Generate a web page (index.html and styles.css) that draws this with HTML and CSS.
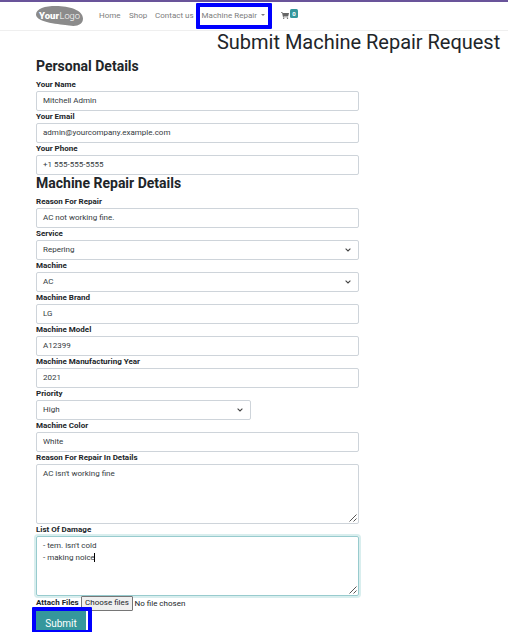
FILE: index.html
```html
<!DOCTYPE html>
<html lang="en">
<head>
<meta charset="utf-8">
<title>Submit Machine Repair Request</title>
<link rel="stylesheet" href="styles.css">
</head>
<body>
<header class="nav">
  <svg class="logo" width="48" height="22" viewBox="0 0 48 22">
    <path d="M1 9.500C1 3.500 10 1 21 1C34 1 48 5 48 13.500C48 19.500 42 22 34 20.500C26 19.500 1 17.500 1 9.500Z" fill="#8b8b8b"/>
    <text class="logo-bold" x="4" y="13.500" textLength="20" lengthAdjust="spacingAndGlyphs">Your</text>
    <text class="logo-thin" x="24.500" y="13.500" textLength="20.500" lengthAdjust="spacingAndGlyphs">Logo</text>
  </svg>
  <nav class="links">
    <a class="home">Home</a>
    <a class="shop">Shop</a>
    <a class="contact">Contact us</a>
    <a class="repair marked">Machine Repair<i class="caret"></i></a>
  </nav>
  <div class="cart">
    <svg width="8" height="7" viewBox="0 0 8 7"><path d="M0 .2h1.500l.3.9H8L7.300 4H2.600l.1.6h4.500v.6H2L1.100.9H0z" fill="#666"/><circle cx="2.7" cy="6.2" r=".7" fill="#666"/><circle cx="6.5" cy="6.2" r=".7" fill="#666"/></svg>
    <span class="badge">0</span>
  </div>
</header>
<main>
  <h1>Submit Machine Repair Request</h1>
  <form class="form">
    <h2>Personal Details</h2>
    <label>Your Name</label>
    <div class="field">Mitchell Admin</div>
    <label>Your Email</label>
    <div class="field">admin@yourcompany.example.com</div>
    <label>Your Phone</label>
    <div class="field">+1 555-555-5555</div>
    <h2>Machine Repair Details</h2>
    <label>Reason For Repair</label>
    <div class="field">AC not working fine.</div>
    <label>Service</label>
    <div class="field select">Repering<svg class="chev" width="6" height="4" viewBox="0 0 6 4"><path d="M.6.7L3 3L5.4.7"/></svg></div>
    <label>Machine</label>
    <div class="field select">AC<svg class="chev" width="6" height="4" viewBox="0 0 6 4"><path d="M.6.7L3 3L5.4.7"/></svg></div>
    <label>Machine Brand</label>
    <div class="field">LG</div>
    <label>Machine Model</label>
    <div class="field">A12399</div>
    <label>Machine Manufacturing Year</label>
    <div class="field">2021</div>
    <label>Priority</label>
    <div class="field select short">High<svg class="chev" width="6" height="4" viewBox="0 0 6 4"><path d="M.6.7L3 3L5.4.7"/></svg></div>
    <label>Machine Color</label>
    <div class="field">White</div>
    <label>Reason For Repair In Details</label>
    <div class="field area">AC isn't working fine<svg class="grip" width="8" height="8" viewBox="0 0 8 8"><path d="M.5 7.5l7-7M4.5 7.5l3-3"/></svg></div>
    <label>List Of Damage</label>
    <div class="field area focus">- tem. isn't cold<br>- making noice<i class="cursor"></i><svg class="grip" width="8" height="8" viewBox="0 0 8 8"><path d="M.5 7.5l7-7M4.5 7.5l3-3"/></svg></div>
    <div class="attach"><label>Attach Files</label><span class="choose">Choose files</span><span class="none">No file chosen</span></div>
    <div class="submit marked">Submit</div>
  </form>
</main>
</body>
</html>
```
FILE: styles.css
```css
*, *::after { box-sizing: border-box; }
body {
  margin: 0;
  height: 632px;
  overflow: hidden;
  background: #fff;
  color: #212529;
  font: 8px/12px Roboto, "Liberation Sans", sans-serif;
}
.nav {
  display: flex;
  align-items: flex-start;
  height: 31px;
  border-top: 2px solid #69549a;
  border-bottom: 1px solid #efefef;
  padding-left: 35px;
  color: #7c7c7c;
}
.logo { margin-top: 3px; flex: none; }
.logo text { fill: #fff; font-size: 9px; }
.logo-bold { font-weight: 900; }
.logo-thin { font-weight: 300; }
.links { display: flex; margin: 8px 0 0 16px; white-space: nowrap; }
.home { width: 30px; }
.shop { width: 26px; }
.contact { width: 46.5px; }
.links a { letter-spacing: 0.02px; }
.repair { position: relative; width: 66px; }
.marked::after {
  content: "";
  position: absolute;
  border: 4px solid #00f;
  border-radius: 1px;
}
.repair::after { left: -5.5px; top: -7px; width: 76px; height: 26px; }
.caret {
  display: inline-block;
  margin-left: 4px;
  vertical-align: 2px;
  border: 2px solid transparent;
  border-top-color: #7c7c7c;
  border-bottom: 0;
}
.cart { display: flex; margin: 7px 0 0 13.5px; }
.cart svg { margin-top: 3px; }
.badge {
  width: 8px;
  height: 9px;
  margin-left: 1px;
  border-radius: 1.5px;
  background: #35979c;
  color: #fff;
  font-size: 6px;
  font-weight: 700;
  line-height: 9px;
  text-align: center;
}
h1 {
  margin: 0;
  height: 26px;
  padding-left: 217px;
  font-size: 20px;
  font-weight: 400;
  line-height: 23px;
  letter-spacing: -0.02px;
  white-space: nowrap;
}
.form { width: 323px; margin-left: 36px; }
h2 {
  margin: 0;
  height: 21px;
  font-size: 14px;
  font-weight: 700;
  line-height: 17px;
  white-space: nowrap;
}
h2:first-child { height: 22px; line-height: 18px; }
label { display: block; height: 12px; font-weight: 700; white-space: nowrap; }
.field {
  position: relative;
  height: 20px;
  padding: 3px 6px;
  border: 1px solid #ced4da;
  border-radius: 2px;
  color: #343a40;
}
.select { display: flex; justify-content: space-between; }
.chev { margin: 4px 1px 0 0; }
.chev path { fill: none; stroke: #444; stroke-width: 1.1; }
.short { width: 215px; }
.area { height: 60px; }
.grip { position: absolute; right: 1px; bottom: 1px; }
.grip path { stroke: #444; stroke-width: 0.9; }
.focus { border-color: #98cbce; box-shadow: 0 0 0 2px #d9eeee; }
.cursor { display: inline-block; width: 1px; height: 9px; margin-left: -1px; background: #000; vertical-align: -2px; }
.attach { position: relative; display: flex; height: 15px; line-height: 14px; white-space: nowrap; }
.attach label { width: 45px; }
.choose {
  width: 52px;
  height: 15px;
  border: 1px solid #767676;
  border-radius: 1px;
  background: #efefef;
  line-height: 12px;
  text-align: center;
}
.none { margin-left: 1.5px; line-height: 15px; }
.submit {
  position: relative;
  width: 50px;
  height: 24px;
  background: #35979c;
  color: #fff;
  font-size: 10px;
  line-height: 25px;
  text-align: center;
}
.submit::after { left: -4px; top: -4px; width: 60px; height: 27px; }
```
